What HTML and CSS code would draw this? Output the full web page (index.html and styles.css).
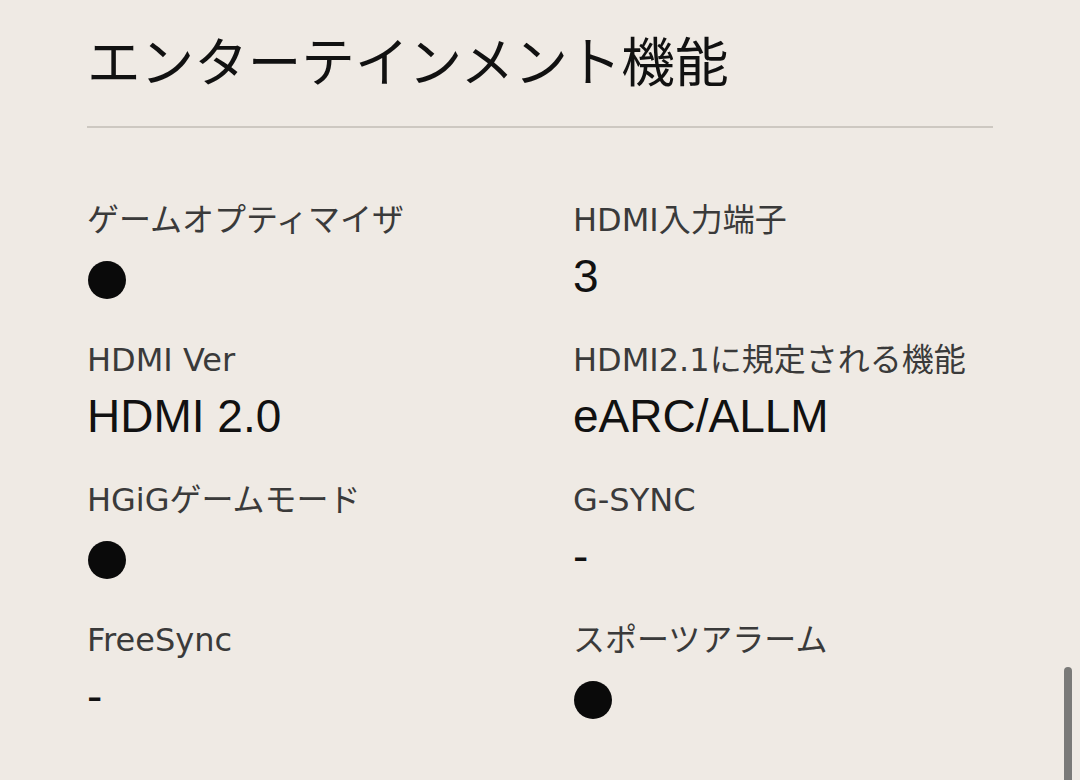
FILE: index.html
```html
<!DOCTYPE html>
<html lang="ja">
<head>
<meta charset="utf-8">
<title>エンターテインメント機能</title>
<link rel="stylesheet" href="styles.css">
</head>
<body>
<main class="section">
  <h2 class="title">エンターテインメント機能</h2>
  <hr class="divider">
  <dl class="specs">
    <div class="item"><dt class="label">ゲームオプティマイザ</dt><dd class="value"><span class="dot">●</span></dd></div>
    <div class="item"><dt class="label">HDMI入力端子</dt><dd class="value">3</dd></div>
    <div class="item"><dt class="label">HDMI Ver</dt><dd class="value">HDMI 2.0</dd></div>
    <div class="item"><dt class="label">HDMI2.1に規定される機能</dt><dd class="value">eARC/ALLM</dd></div>
    <div class="item"><dt class="label">HGiGゲームモード</dt><dd class="value"><span class="dot">●</span></dd></div>
    <div class="item"><dt class="label">G-SYNC</dt><dd class="value">-</dd></div>
    <div class="item"><dt class="label">FreeSync</dt><dd class="value">-</dd></div>
    <div class="item"><dt class="label">スポーツアラーム</dt><dd class="value"><span class="dot">●</span></dd></div>
  </dl>
</main>
<div class="scrollbar"></div>
</body>
</html>
```

FILE: styles.css
```css
html, body {
  margin: 0;
  padding: 0;
  background: #efeae4;
  height: 100%;
  overflow: hidden;
}
body {
  font-family: "Liberation Sans", "Noto Sans CJK JP", sans-serif;
  color: #111;
}
.section {
  padding: 27px 0 0 87px;
  width: 906px;
}
.title {
  margin: 0;
  font-family: "Noto Sans CJK JP", sans-serif;
  font-weight: 400;
  font-size: 53.6px;
  line-height: 64px;
  color: #111;
}
.divider {
  margin: 35px 0 0 0;
  border: 0;
  height: 2px;
  background: #cdc8c1;
}
.specs {
  margin: 68px 0 0 0;
  display: grid;
  grid-template-columns: 486px 420px;
  row-gap: 28px;
}
.item {
  display: flex;
  flex-direction: column;
}
.label {
  margin: 0;
  font-family: "DejaVu Sans", "Noto Sans CJK JP", sans-serif;
  font-size: 32px;
  line-height: 48px;
  color: #3a3a3a;
  white-space: nowrap;
}
.value {
  margin: 0;
  font-size: 46px;
  line-height: 64px;
  color: #111;
}
.dot {
  display: inline-block;
  width: 38px;
  height: 38px;
  border-radius: 50%;
  background: #0a0a0a;
  color: transparent;
  font-size: 10px;
  line-height: 38px;
  overflow: hidden;
  vertical-align: middle;
  margin-left: 1px;
}
.scrollbar {
  position: fixed;
  left: 1064px;
  top: 667px;
  width: 8px;
  height: 120px;
  border-radius: 4px;
  background: #7a7a78;
}
```
